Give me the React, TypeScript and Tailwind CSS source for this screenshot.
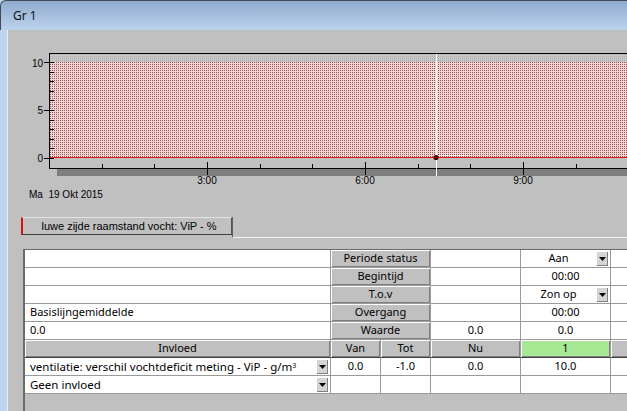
import React from "react";

const ui = "font-['Noto_Sans','Open_Sans',sans-serif]";
const arial = "font-['Liberation_Sans',Arial,sans-serif]";

const bevel = "shadow-[inset_1px_1px_0_#ffffff,inset_-1px_-1px_0_#808080]";

function Chart() {
  const hx = (h: number) => Math.round(49 + 52.67 * h) + 0.5;
  const hours = [1, 2, 3, 4, 5, 6, 7, 8, 9, 10];
  const minorY = [1, 2, 3, 4, 6, 7, 8, 9].map((k) => Math.round(62 + 9.6 * k) + 0.5);
  return (
    <svg width={619} height={180} viewBox="8 30 619 180" className="block shrink-0" shapeRendering="crispEdges">
      <defs>
        <pattern id="pink" width="2" height="2" patternUnits="userSpaceOnUse">
          <rect width="2" height="2" fill="#f7d4d4" />
          <rect width="1" height="1" fill="#8e5656" />
        </pattern>
        <pattern id="grey" width="2" height="2" patternUnits="userSpaceOnUse">
          <rect width="2" height="2" fill="#c6c6c6" />
          <rect width="1" height="1" fill="#b0b0b0" />
        </pattern>
      </defs>
      {/* plot area */}
      <rect x={50} y={54} width={577} height={8} fill="url(#grey)" />
      <rect x={50} y={62} width={577} height={96} fill="url(#pink)" />
      <line x1={50} y1={157.5} x2={627} y2={157.5} stroke="#e01818" />
      {/* frame */}
      <line x1={49} y1={53.5} x2={627} y2={53.5} stroke="#000" />
      <line x1={49.5} y1={53} x2={49.5} y2={169} stroke="#000" />
      <line x1={49} y1={168.5} x2={627} y2={168.5} stroke="#000" />
      <rect x={57} y={169} width={570} height={7} fill="#7e7e7e" />
      {/* y ticks */}
      {[62.5, 110.5, 158.5].map((y) => (
        <line key={y} x1={44} y1={y} x2={54} y2={y} stroke="#000" />
      ))}
      {minorY.map((y) => (
        <line key={y} x1={49} y1={y} x2={54} y2={y} stroke="#000" />
      ))}
      <g fontFamily="'Liberation Sans', Arial, sans-serif" fontSize={10} fill="#000">
        <text x={43} y={66.5} textAnchor="end">10</text>
        <text x={43} y={114} textAnchor="end">5</text>
        <text x={43} y={162} textAnchor="end">0</text>
      </g>
      {/* x ticks */}
      {hours.map((h) =>
        h % 3 === 0 ? (
          <line key={h} x1={hx(h)} y1={162} x2={hx(h)} y2={175} stroke="#000" />
        ) : (
          <line key={h} x1={hx(h)} y1={164} x2={hx(h)} y2={169} stroke="#000" />
        )
      )}
      {/* cursor */}
      <line x1={436.5} y1={54} x2={436.5} y2={176} stroke="#fff" />
      <line x1={437} y1={155.5} x2={468} y2={155.5} stroke="#fff" strokeDasharray="1 1" />
      <circle cx={436} cy={157.5} r={2.6} fill="#5a0000" shapeRendering="auto" />
      <g fontFamily="'Liberation Sans', Arial, sans-serif" fontSize={10} fill="#000" textAnchor="middle">
        <text x={207} y={184}>3:00</text>
        <text x={365} y={184}>6:00</text>
        <text x={523} y={184}>9:00</text>
        <text x={29} y={197.5} textAnchor="start" xmlSpace="preserve">Ma  19 Okt 2015</text>
      </g>
    </svg>
  );
}

function Drop() {
  return (
    <div className={`absolute top-px right-[2px] w-[12px] h-[15px] bg-[#d4d4d4] ${bevel} flex items-center justify-center`}>
      <svg width="7" height="4" viewBox="0 0 7 4">
        <path d="M0 0h7L3.5 4z" fill="#000" />
      </svg>
    </div>
  );
}

type CellProps = {
  w: string;
  children?: React.ReactNode;
  kind?: "white" | "btn" | "green";
  align?: "left" | "center";
  drop?: boolean;
  dark?: boolean;
};

function Cell({ w, children, kind = "white", align = "center", drop, dark }: CellProps) {
  const bb = dark ? "border-b-[#404040]" : "border-b-[#9a9a9a]";
  const inner =
    kind === "btn"
      ? `bg-[#c0c0c0] ${bevel}`
      : kind === "green"
      ? `bg-[#a6e894] ${bevel}`
      : "bg-white";
  return (
    <div className={`${w} shrink-0 h-[18px] border-r border-b border-r-[#9a9a9a] ${bb} relative`}>
      <div
        className={`h-full w-full ${inner} flex items-center ${
          align === "left" ? "justify-start pl-[5px]" : "justify-center"
        } ${drop && align === "center" ? "pr-[14px]" : ""} whitespace-nowrap overflow-hidden`}
      >
        {children}
      </div>
      {drop && <Drop />}
    </div>
  );
}

export default function App() {
  return (
    <div className={`w-[627px] h-[411px] overflow-hidden bg-[#bfd4ec] flex flex-col ${ui}`}>
      <div className="h-[30px] shrink-0 bg-gradient-to-b from-[#8fabcd] to-[#bcd3ec] border-t border-l border-[#3c4a5a] rounded-tl-[6px] flex items-center pl-[12px] pt-[1px] text-[12px] text-[#111]">
        Gr 1
      </div>
      <div className="flex flex-1 min-h-0">
        <div className="w-[8px] shrink-0 bg-[#bfd4ec] border-r border-[#e4eef8]" />
        <div className="flex-1 min-w-0 bg-[#c0c0c0] flex flex-col">
          <Chart />
          <div className="mt-[7px] h-[21px] shrink-0 flex items-stretch">
            <div className="w-[13px] shrink-0" />
            <div className={`w-[211px] h-[18px] shrink-0 bg-[#c0c0c0] border-l-2 border-l-[#d81010] border-t border-t-[#e4e4e4] border-b border-b-[#404040] border-r border-r-[#505050] flex items-center justify-center pl-[4px] text-[11px] text-black ${arial}`}>
              luwe zijde raamstand vocht: ViP - %
            </div>
            <div className="flex-1 border-b border-[#f4f4f4] border-l border-l-[#606060]" />
          </div>
          <div className="mt-[11px] ml-[15px] flex-1 border-l-2 border-t border-[#6a6a6a] flex flex-col text-[11px] text-black">
            <div className="flex">
              <Cell w="w-[306px]" />
              <Cell w="w-[100px]" kind="btn">Periode status</Cell>
              <Cell w="w-[90px]" />
              <Cell w="w-[90px]" drop>Aan</Cell>
              <Cell w="w-[60px]" />
            </div>
            <div className="flex">
              <Cell w="w-[306px]" />
              <Cell w="w-[100px]" kind="btn">Begintijd</Cell>
              <Cell w="w-[90px]" />
              <Cell w="w-[90px]">00:00</Cell>
              <Cell w="w-[60px]" />
            </div>
            <div className="flex">
              <Cell w="w-[306px]" />
              <Cell w="w-[100px]" kind="btn">T.o.v</Cell>
              <Cell w="w-[90px]" />
              <Cell w="w-[90px]" drop>Zon op</Cell>
              <Cell w="w-[60px]" />
            </div>
            <div className="flex">
              <Cell w="w-[306px]" align="left">Basislijngemiddelde</Cell>
              <Cell w="w-[100px]" kind="btn">Overgang</Cell>
              <Cell w="w-[90px]" />
              <Cell w="w-[90px]">00:00</Cell>
              <Cell w="w-[60px]" />
            </div>
            <div className="flex">
              <Cell w="w-[306px]" align="left">0.0</Cell>
              <Cell w="w-[100px]" kind="btn">Waarde</Cell>
              <Cell w="w-[90px]">0.0</Cell>
              <Cell w="w-[90px]">0.0</Cell>
              <Cell w="w-[60px]" />
            </div>
            <div className="flex">
              <Cell w="w-[306px]" kind="btn" dark>Invloed</Cell>
              <Cell w="w-[50px]" kind="btn" dark>Van</Cell>
              <Cell w="w-[50px]" kind="btn" dark>Tot</Cell>
              <Cell w="w-[90px]" kind="btn" dark>Nu</Cell>
              <Cell w="w-[90px]" kind="green" dark>1</Cell>
              <Cell w="w-[60px]" kind="btn" dark />
            </div>
            <div className="flex">
              <Cell w="w-[306px]" align="left" drop>
                <span className="text-[11.5px]">ventilatie: verschil vochtdeficit meting - ViP - g/m</span>
                <sup className="text-[7px] relative -top-[1px]">3</sup>
              </Cell>
              <Cell w="w-[50px]">0.0</Cell>
              <Cell w="w-[50px]">-1.0</Cell>
              <Cell w="w-[90px]">0.0</Cell>
              <Cell w="w-[90px]">10.0</Cell>
              <Cell w="w-[60px]" />
            </div>
            <div className="flex">
              <Cell w="w-[306px]" align="left" drop>
                <span className="text-[11.5px]">Geen invloed</span>
              </Cell>
              <Cell w="w-[50px]" />
              <Cell w="w-[50px]" />
              <Cell w="w-[90px]" />
              <Cell w="w-[90px]" />
              <Cell w="w-[60px]" />
            </div>
          </div>
        </div>
      </div>
    </div>
  );
}
